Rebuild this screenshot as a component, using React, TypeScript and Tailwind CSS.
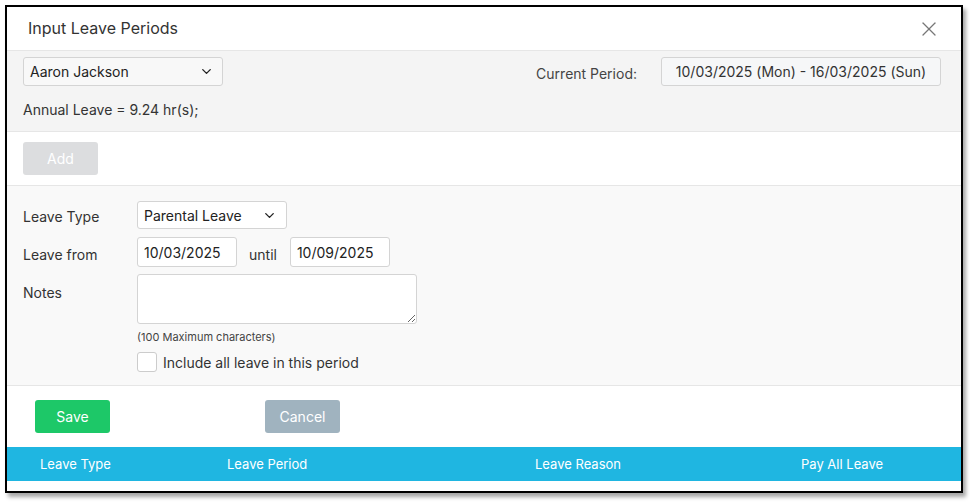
import { ChevronDown, X } from "lucide-react";

const columns = [
  { label: "Leave Type", width: "w-[187px]" },
  { label: "Leave Period", width: "w-[308px]" },
  { label: "Leave Reason", width: "w-[266px]" },
  { label: "Pay All Leave", width: "flex-1" },
];

const App = () => {
  return (
    <div className="w-[970px] h-[502px] bg-white pl-[5px] pt-[5px] font-['Inter',sans-serif] text-[#333]">
      <div className="w-[958px] h-[488px] border-2 border-black bg-white shadow-[3px_4px_4px_rgba(0,0,0,0.35)] flex flex-col overflow-hidden">
        {/* header */}
        <div className="h-[44px] shrink-0 flex items-center justify-between pl-[21px] pr-[20px] border-b border-[#e6e6e6]">
          <h1 className="text-[16px] text-[#333] mb-[2px]">Input Leave Periods</h1>
          <X size={24} strokeWidth={1.3} className="text-[#777]" />
        </div>

        {/* employee */}
        <div className="h-[81px] shrink-0 bg-[#f4f4f4] border-b border-[#e6e6e6] pl-[16px] pr-[20px] pt-[6px]">
          <div className="flex items-center justify-between">
            <div className="w-[200px] h-[29px] bg-[#f8f8f8] border border-[#d4d4d4] rounded-[3px] flex items-center justify-between pl-[6px] pr-[8px] text-[14px] text-[#222]">
              <span>Aaron Jackson</span>
              <ChevronDown size={15} strokeWidth={2.2} className="text-[#222]" />
            </div>
            <div className="flex items-center gap-[24px]">
              <span className="text-[14px] text-[#444] mt-[4px]">Current Period:</span>
              <div className="w-[280px] h-[29px] bg-[#f6f7f8] border border-[#d4d4d4] rounded-[3px] flex items-center justify-center text-[14px] text-[#333]">
                10/03/2025 (Mon) - 16/03/2025 (Sun)
              </div>
            </div>
          </div>
          <p className="mt-[13px] text-[14px] text-[#333]">Annual Leave = 9.24 hr(s);</p>
        </div>

        {/* add */}
        <div className="h-[54px] shrink-0 border-b border-[#e6e6e6] px-[16px] pt-[10px]">
          <button className="w-[75px] h-[33px] rounded-[3px] bg-[#dcdddf] text-white text-[14px]">Add</button>
        </div>

        {/* form */}
        <div className="h-[200px] shrink-0 bg-[#f9f9f9] border-b border-[#e6e6e6] px-[16px] pt-[15px]">
          <div className="flex items-center">
            <label className="w-[114px] text-[14px] text-[#333] mt-[3px]">Leave Type</label>
            <div className="w-[150px] h-[28px] bg-white border border-[#d4d4d4] rounded-[3px] flex items-center justify-between pl-[6px] pr-[9px] text-[14px] text-[#222]">
              <span>Parental Leave</span>
              <ChevronDown size={15} strokeWidth={2.2} className="text-[#222]" />
            </div>
          </div>
          <div className="flex items-center mt-[8px]">
            <label className="w-[114px] text-[14px] text-[#333] mt-[5px]">Leave from</label>
            <div className="w-[100px] h-[30px] bg-white border border-[#d4d4d4] rounded-[3px] flex items-center pl-[6px] text-[14px] text-[#222]">
              10/03/2025
            </div>
            <span className="ml-[12px] mr-[13px] text-[14px] text-[#333] mt-[5px]">until</span>
            <div className="w-[100px] h-[30px] bg-white border border-[#d4d4d4] rounded-[3px] flex items-center pl-[6px] text-[14px] text-[#222]">
              10/09/2025
            </div>
          </div>
          <div className="flex items-start mt-[7px]">
            <label className="w-[114px] text-[14px] text-[#333] mt-[8px]">Notes</label>
            <div>
              <textarea className="block w-[280px] h-[50px] bg-white border border-[#d4d4d4] rounded-[3px] resize-y" />
              <p className="mt-[5px] text-[11px] text-[#444]">(100 Maximum characters)</p>
              <label className="flex items-center gap-[6px] mt-[6px]">
                <span className="w-[20px] h-[20px] bg-white border border-[#ccc] rounded-[3px]" />
                <span className="text-[14px] text-[#333]">Include all leave in this period</span>
              </label>
            </div>
          </div>
        </div>

        {/* actions */}
        <div className="h-[61px] shrink-0 flex items-start pt-[14px] pl-[28px]">
          <button className="w-[75px] h-[33px] rounded-[3px] bg-[#1dc868] text-white text-[14px]">Save</button>
          <button className="ml-[155px] w-[75px] h-[33px] rounded-[3px] bg-[#a0b3bf] text-white text-[14px]">Cancel</button>
        </div>

        {/* table header */}
        <div className="h-[34px] shrink-0 bg-[#1fb6e1] flex items-center pt-[1px]">
          {columns.map((col) => (
            <div key={col.label} className={`${col.width} pl-[33px] text-[13px] text-white`}>
              {col.label}
            </div>
          ))}
        </div>
        <div className="flex-1 bg-white" />
      </div>
    </div>
  );
};

export default App;
